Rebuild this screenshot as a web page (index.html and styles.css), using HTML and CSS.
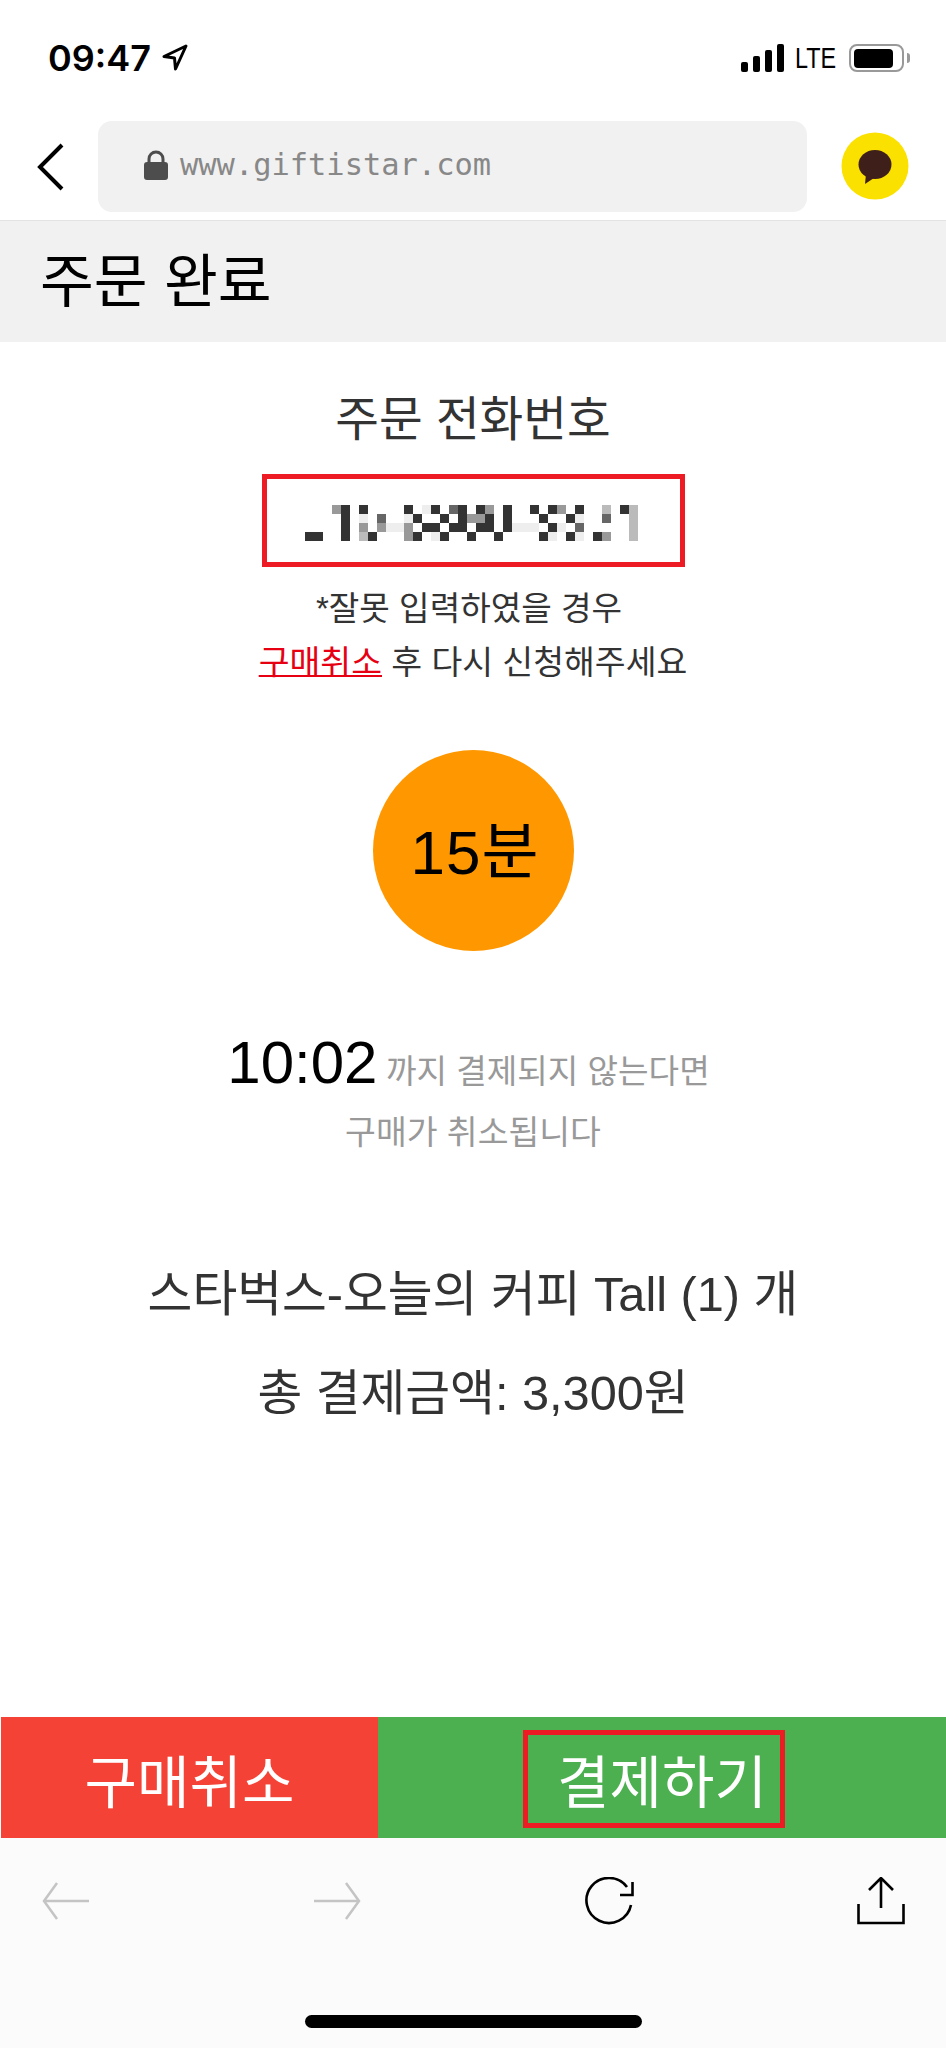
FILE: index.html
```html
<!DOCTYPE html>
<html lang="ko">
<head>
<meta charset="utf-8">
<title>주문 완료</title>
<link rel="stylesheet" href="styles.css">
</head>
<body>
<div class="screen">
  <header class="status">
    <div class="status-left">
      <span class="clock">09:47</span>
      <svg class="loc" width="26" height="28" viewBox="0 0 26 28"><path d="M24 2 2 12.5 12.5 14 13.5 25Z" fill="none" stroke="#000" stroke-width="3" stroke-linejoin="round"/></svg>
    </div>
    <div class="status-right">
      <div class="signal"><i class="b1"></i><i class="b2"></i><i class="b3"></i><i class="b4"></i></div>
      <span class="lte">LTE</span>
      <div class="battery"><div class="battery-body"><div class="battery-fill"></div></div><div class="battery-nub"></div></div>
    </div>
  </header>

  <nav class="nav">
    <svg class="back" width="28" height="50" viewBox="0 0 28 50"><path d="M25 3 3 25 25 47" fill="none" stroke="#000" stroke-width="4"/></svg>
    <div class="url">
      <svg class="lock" width="24" height="30" viewBox="0 0 24 30"><path d="M5 14V9a7 7 0 0 1 14 0v5" fill="none" stroke="#4d4d4d" stroke-width="3"/><rect x="0" y="12" width="24" height="18" rx="3" fill="#4d4d4d"/></svg>
      <span class="url-text">www.giftistar.com</span>
    </div>
    <svg class="kakao" width="68" height="68" viewBox="0 0 68 68"><circle cx="34" cy="34" r="33.5" fill="#fae100"/><ellipse cx="34" cy="32.5" rx="16.5" ry="14.5" fill="#3f1f1a"/><path d="M25 42 24 52 33 46Z" fill="#3f1f1a"/></svg>
  </nav>

  <div class="page-title">주문 완료</div>

  <main class="content">
    <div class="phone-label">주문 전화번호</div>
    <div class="phone-box">
      <svg class="mosaic" width="333" height="36" viewBox="0 0 37 4" shape-rendering="crispEdges">
        <g fill="#333">
          <rect x="4" y="0" width="1" height="4"/><rect x="6" y="0" width="1" height="1"/><rect x="11" y="0" width="1" height="1"/><rect x="14" y="0" width="1" height="1"/><rect x="17" y="0" width="1" height="3"/><rect x="19" y="0" width="1" height="3"/><rect x="22" y="0" width="1" height="3"/><rect x="25" y="0" width="1" height="1"/><rect x="27" y="0" width="1" height="1"/><rect x="30" y="0" width="1" height="1"/><rect x="35" y="0" width="1" height="1"/>
          <rect x="12" y="1" width="1" height="1"/><rect x="15" y="1" width="1" height="1"/><rect x="20" y="1" width="1" height="2"/><rect x="26" y="1" width="1" height="1"/><rect x="29" y="1" width="1" height="1"/>
          <rect x="13" y="2" width="2" height="1"/><rect x="16" y="2" width="1" height="1"/><rect x="27" y="2" width="1" height="1"/>
          <rect x="0" y="3" width="2" height="1"/><rect x="7" y="3" width="1" height="1"/><rect x="12" y="3" width="1" height="1"/><rect x="15" y="3" width="1" height="1"/><rect x="18" y="3" width="1" height="1"/><rect x="21" y="3" width="1" height="1"/><rect x="26" y="3" width="1" height="1"/><rect x="29" y="3" width="1" height="1"/><rect x="32" y="3" width="1" height="1"/>
        </g>
        <g fill="#999">
          <rect x="3" y="0" width="1" height="1"/><rect x="28" y="0" width="1" height="1"/><rect x="20" y="0" width="1" height="1"/><rect x="18" y="1" width="2" height="1"/><rect x="6" y="2" width="1" height="1"/><rect x="8" y="2" width="1" height="1"/><rect x="11" y="2" width="1" height="2"/><rect x="33" y="3" width="1" height="1"/>
        </g>
        <g fill="#666">
          <rect x="16" y="0" width="1" height="1"/><rect x="8" y="1" width="1" height="1"/><rect x="33" y="1" width="1" height="1"/><rect x="30" y="2" width="1" height="1"/>
        </g>
        <g fill="#bbb">
          <rect x="36" y="0" width="1" height="4"/><rect x="33" y="0" width="1" height="1"/><rect x="6" y="3" width="1" height="1"/>
        </g>
        <g fill="#eee">
          <rect x="13" y="0" width="1" height="1"/><rect x="6" y="1" width="1" height="1"/><rect x="11" y="1" width="1" height="1"/><rect x="30" y="1" width="1" height="1"/><rect x="9" y="2" width="2" height="1"/><rect x="23" y="2" width="3" height="1"/><rect x="28" y="2" width="1" height="1"/><rect x="14" y="3" width="1" height="1"/><rect x="27" y="3" width="1" height="1"/><rect x="30" y="3" width="1" height="1"/>
        </g>
      </svg>
    </div>
    <p class="note note-first">*잘못 입력하였을 경우</p>
    <p class="note"><a class="cancel-link" href="#">구매취소</a> 후 다시 신청해주세요</p>

    <div class="timer">15분</div>

    <p class="deadline"><span class="deadline-time">10:02</span> <span class="deadline-text">까지 결제되지 않는다면</span></p>
    <p class="deadline-sub">구매가 취소됩니다</p>

    <p class="product">스타벅스-오늘의 커피 Tall (1) 개</p>
    <p class="total">총 결제금액: 3,300원</p>
  </main>

  <div class="actions">
    <button class="btn btn-cancel">구매취소</button>
    <button class="btn btn-pay">결제하기<span class="highlight"></span></button>
  </div>

  <footer class="toolbar">
    <div class="tools">
      <svg width="48" height="38" viewBox="0 0 48 38"><path d="M47 19H2M15 1 2 19l13 18" fill="none" stroke="#c4c4c4" stroke-width="2.5"/></svg>
      <svg width="48" height="38" viewBox="0 0 48 38"><path d="M1 19h45M33 1l13 18-13 18" fill="none" stroke="#c4c4c4" stroke-width="2.5"/></svg>
      <svg width="50" height="48" viewBox="0 0 50 48"><path d="M47 28A22.5 22.5 0 1 1 43 10" fill="none" stroke="#000" stroke-width="2.6"/><path d="M48.500 5V18H36" fill="none" stroke="#000" stroke-width="2.6"/></svg>
      <svg width="48" height="48" viewBox="0 0 48 48"><path d="M24 1V31M12 13 24 1 36 13M1.500 27V46H46.500V27" fill="none" stroke="#000" stroke-width="2.6"/></svg>
    </div>
    <div class="home-bar"></div>
  </footer>
</div>
</body>
</html>
```
FILE: styles.css
```css
* { box-sizing: border-box; }
html, body { margin: 0; padding: 0; background: #fff; }
body { font-family: "Liberation Sans", "Noto Sans CJK KR", sans-serif; }
p { margin: 0; }

.screen { width: 946px; height: 2048px; display: flex; flex-direction: column; overflow: hidden; }

.status { height: 121px; padding: 43px 36px 0 48px; display: flex; justify-content: space-between; align-items: flex-start; flex: none; }
.status-left { display: flex; align-items: center; gap: 11px; height: 30px; }
.clock { font-family: Inter, sans-serif; font-weight: 600; font-size: 36px; line-height: 30px; color: #000; }
.status-right { display: flex; align-items: center; height: 30px; }
.signal { display: flex; align-items: flex-end; gap: 5px; height: 28px; }
.signal i { display: block; width: 7px; background: #000; border-radius: 2px; }
.b1 { height: 10px; }
.b2 { height: 16px; }
.b3 { height: 22px; }
.b4 { height: 28px; }
.lte { font-family: "Liberation Sans", sans-serif; font-size: 30px; line-height: 30px; width: 43px; margin: 0 11px; color: #000; white-space: nowrap; transform: scaleX(0.78); transform-origin: left center; }
.battery { display: flex; align-items: center; gap: 3px; }
.battery-body { width: 55px; height: 28px; border: 2.5px solid #999; border-radius: 8px; padding: 2.5px; }
.battery-fill { width: 39px; height: 100%; background: #000; border-radius: 4px; }
.battery-nub { width: 3px; height: 10px; background: #999; border-radius: 0 3px 3px 0; }

.nav { height: 100px; padding: 0 37px 9px 37px; display: flex; align-items: flex-start; flex: none; border-bottom: 1px solid #e3e3e3; position: relative; }
.back { flex: none; margin-top: 21px; }
.url { width: 709px; height: 91px; margin-left: 33px; background: #f1f1f1; border-radius: 14px; display: flex; align-items: center; padding: 0 0 0 46px; gap: 12px; flex: none; }
.lock { flex: none; margin-top: -4px; }
.url-text { font-family: "DejaVu Sans Mono", monospace; font-size: 30.4px; color: #888; line-height: 40px; margin-top: -3px; }
.kakao { flex: none; margin: 11px 0 0 34px; }

.page-title { height: 121px; background: #f1f1f1; padding-left: 40px; font-size: 58.5px; line-height: 122px; color: #000; flex: none; }

.content { flex: 1; display: flex; flex-direction: column; align-items: center; color: #333; }
.phone-label { font-size: 47.5px; line-height: 60px; margin-top: 48px; }
.phone-box { width: 423px; height: 93px; margin-top: 24px; border: 5px solid #ed1c24; display: flex; align-items: center; justify-content: flex-start; padding-left: 38px; }
.mosaic { display: block; margin-top: 5px; }
.note { font-size: 33.5px; line-height: 54px; }
.note-first { margin-top: 15px; font-size: 33.2px; padding-right: 8px; }
.cancel-link { color: #e60012; text-decoration: underline; text-decoration-thickness: 2px; }
.timer { width: 201px; height: 201px; border-radius: 50%; background: #ff9800; margin-top: 60px; padding: 5px 0 0 4px; display: flex; align-items: center; justify-content: center; font-size: 62px; letter-spacing: 1px; line-height: 70px; color: #000; }
.deadline { margin-top: 77px; line-height: 70px; height: 70px; white-space: nowrap; padding-right: 9px; }
.deadline-time { font-size: 60px; color: #000; }
.deadline-text { font-size: 33.2px; color: #999; margin-left: 4px; }
.deadline-sub { font-size: 33.5px; line-height: 50px; color: #999; margin-top: 10px; }
.product { font-size: 48.7px; line-height: 60px; margin-top: 106px; white-space: nowrap; }
.total { font-size: 48.7px; line-height: 60px; margin-top: 39px; white-space: nowrap; }

.actions { height: 121px; flex: none; display: flex; padding-left: 1px; background: #fff; }
.btn { border: 0; padding: 0; margin: 0; font: inherit; font-size: 57px; color: #fff; height: 121px; display: block; position: relative; }
.btn-cancel { width: 377px; background: #f44336; }
.btn-pay { flex: 1; background: #4caf50; }
.highlight { position: absolute; left: 145px; top: 13px; width: 262px; height: 98px; border: 5px solid #ed1c24; }

.toolbar { height: 210px; flex: none; background: #fbfbfb; padding-top: 39px; display: flex; flex-direction: column; }
.tools { height: 48px; padding: 0 41px 0 42px; display: flex; align-items: center; justify-content: space-between; }
.home-bar { width: 337px; height: 13px; background: #000; border-radius: 7px; margin: 90px 0 0 305px; }
```
